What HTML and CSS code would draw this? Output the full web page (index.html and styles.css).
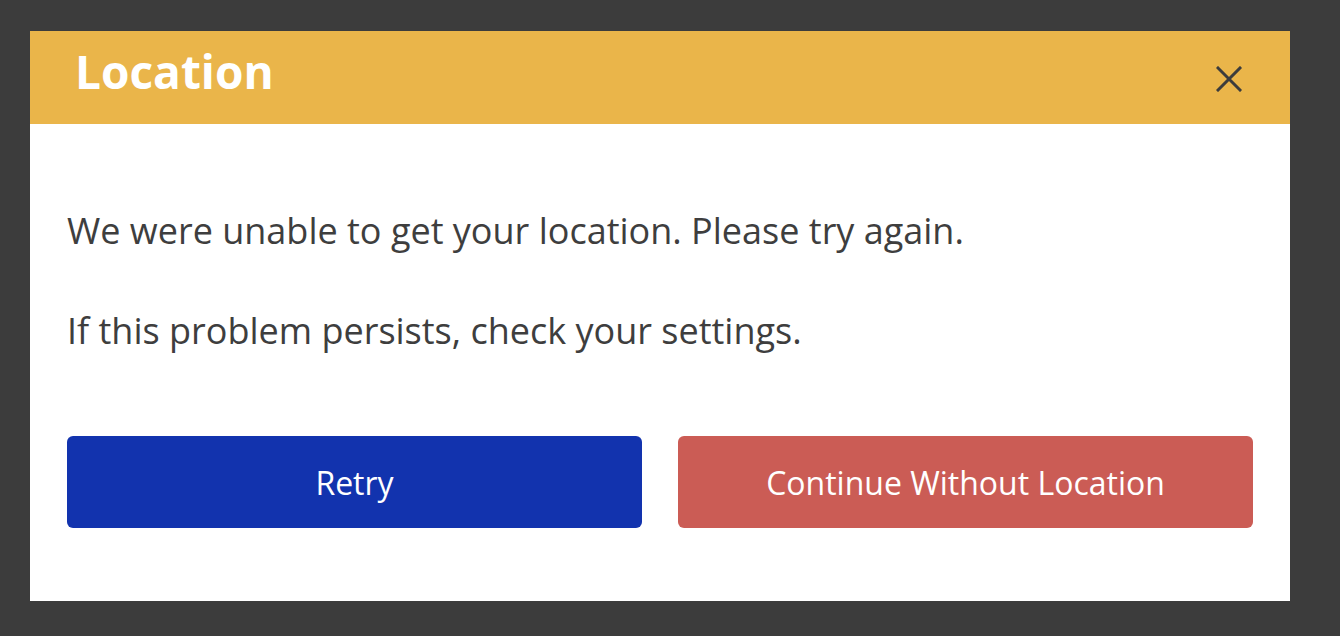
FILE: index.html
```html
<!DOCTYPE html>
<html>
<head>
<meta charset="utf-8">
<link rel="stylesheet" href="styles.css">
</head>
<body>
<div class="dialog">
  <div class="dialog-header">
    <h1 class="dialog-title">Location</h1>
    <button class="close-btn" aria-label="Close">
      <svg width="26" height="26" viewBox="0 0 26 26"><path d="M2 2 L24 24 M24 2 L2 24" stroke="#3c3c3c" stroke-width="3" stroke-linecap="square"/></svg>
    </button>
  </div>
  <div class="dialog-body">
    <p class="msg">We were unable to get your location. Please try again.</p>
    <p class="msg msg-second">If this problem persists, check your settings.</p>
    <div class="actions">
      <button class="btn btn-retry">Retry</button>
      <button class="btn btn-continue">Continue Without Location</button>
    </div>
  </div>
</div>
</body>
</html>
```
FILE: styles.css
```css
html, body {
  margin: 0;
  padding: 0;
  background: #3c3c3c;
  font-family: "Open Sans", "Liberation Sans", sans-serif;
}
body {
  padding: 31px 0 0 30px;
}
.dialog {
  width: 1260px;
  height: 570px;
  background: #ffffff;
  display: flex;
  flex-direction: column;
}
.dialog-header {
  height: 93px;
  background: #eab54a;
  display: flex;
  align-items: flex-start;
  justify-content: space-between;
  padding: 0 48px 0 45px;
}
.dialog-title {
  margin: 17px 0 0 0;
  color: #ffffff;
  font-size: 46px;
  font-weight: 700;
  line-height: 46px;
}
.close-btn {
  background: none;
  border: 0;
  padding: 0;
  width: 26px;
  height: 26px;
  display: flex;
  margin-top: 35px;
}
.dialog-body {
  padding: 85px 37px 0 37px;
}
.msg {
  margin: 0;
  font-size: 36px;
  line-height: 44px;
  color: #3e3e3e;
}
.msg-second {
  margin-top: 56px;
}
.actions {
  display: flex;
  gap: 36px;
  margin-top: 83px;
}
.btn {
  flex: 1;
  height: 92px;
  border: 0;
  border-radius: 6px;
  color: #ffffff;
  font-family: "Open Sans", "Liberation Sans", sans-serif;
  font-size: 32px;
}
.btn-retry {
  background: #1233ae;
}
.btn-continue {
  background: #cb5c55;
}
```
